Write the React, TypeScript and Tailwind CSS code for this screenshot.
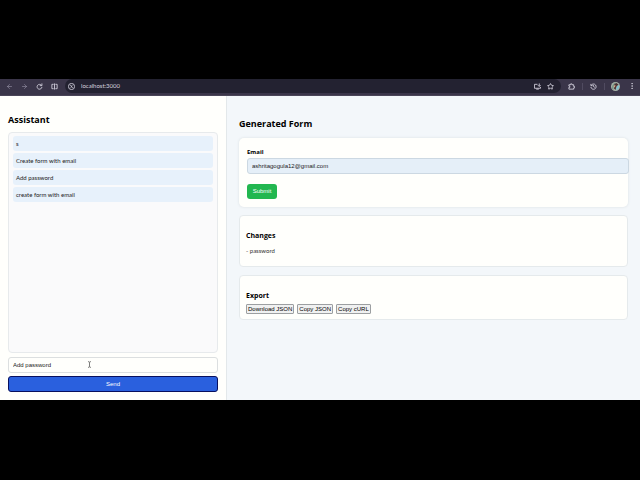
import React, { useState } from "react";
import { ArrowLeft, ArrowRight, EllipsisVertical, Star } from "lucide-react";

const messages = ["s", "Create form with email", "Add password", "create form with email"];

const App = () => {
  return (
    <div className="flex min-h-screen flex-col bg-black pt-[79px] pb-20 font-['Lato',sans-serif] text-black">
      <BrowserBar />
      <main className="flex flex-1 bg-[#f3f7fa]">
        <Assistant />
        <section className="flex min-w-0 flex-1 flex-col gap-2 py-5 pr-3 pl-3">
          <h2 className="pt-[2px] font-['Open_Sans',sans-serif] text-[9px] leading-[12px] font-bold">
            Generated Form
          </h2>
          <GeneratedForm />
          <Panel title="Changes" className="pb-[10px]">
            <p className="mt-[5px] text-[6px] leading-[10px] text-[#333]">- password</p>
          </Panel>
          <Panel title="Export" className="pb-[5px]">
            <div className="mt-[3px] flex gap-[3px]">
              <ExportButton label="Download JSON" />
              <ExportButton label="Copy JSON" />
              <ExportButton label="Copy cURL" />
            </div>
          </Panel>
        </section>
      </main>
    </div>
  );
};

const BrowserBar = () => {
  return (
    <header className="flex h-[17px] items-center border-b border-[#4a4558] bg-[#3a3549] pb-[2px] text-[#d4d1de]">
      <nav className="flex w-[65px] shrink-0 items-center gap-2 pl-[6px]">
        <IconButton label="Back">
          <ArrowLeft className="size-[7px] text-[#9b96aa]" />
        </IconButton>
        <IconButton label="Forward">
          <ArrowRight className="size-[7px] text-[#9b96aa]" />
        </IconButton>
        <IconButton label="Reload">
          <LineIcon d="M12.5 5.5A5.5 5.5 0 1 0 13.5 9M13.5 1V6H8.5" />
        </IconButton>
        <IconButton label="Split view">
          <LineIcon d="M6 3H2V13H6M10 3H14V13H10M8 1V15" />
        </IconButton>
      </nav>
      <div className="flex h-[14px] min-w-0 flex-1 items-center rounded-full bg-[#232231] pr-[7px] pl-[3px]">
        <IconButton label="Site information">
          <LineIcon d="M8 1A7 7 0 1 1 8 15A7 7 0 1 1 8 1M5 6H8M8 10H11M6 10L10 6" />
        </IconButton>
        <input
          aria-label="Address"
          defaultValue="localhost:3000"
          className="ml-[6px] min-w-0 flex-1 bg-transparent text-[6px] leading-[10px] outline-none"
        />
        <div className="flex gap-[6px]">
          <IconButton label="Install app">
            <LineIcon d="M8 3H1V12H15V9M5 14H11M12 1V7M9 5L12 8 15 5" />
          </IconButton>
          <IconButton label="Bookmark">
            <Star className="size-[7px]" strokeWidth={3} />
          </IconButton>
        </div>
      </div>
      <div className="flex items-center gap-[7px] pr-[5px] pl-[7px]">
        <IconButton label="Extensions">
          <LineIcon d="M2 4H6V2H9V4H13V8H15V11H13V14H2V10H4V7H2Z" />
        </IconButton>
        <span className="h-[7px] w-px bg-[#504b60]" />
        <IconButton label="History">
          <LineIcon d="M3 5A6 6 0 1 1 2 9M2 2V6H6M8 5V8L11 10" />
        </IconButton>
        <span className="h-[7px] w-px bg-[#504b60]" />
        <div className="flex gap-[9px]">
          <IconButton label="Profile">
            <Avatar />
          </IconButton>
          <IconButton label="Menu">
            <EllipsisVertical className="size-2 shrink-0" />
          </IconButton>
        </div>
      </div>
    </header>
  );
};

const IconButton = ({ label, children }: { label: string; children: React.ReactNode }) => {
  return (
    <button type="button" aria-label={label} className="flex h-2 w-[7px] shrink-0 items-center justify-center">
      {children}
    </button>
  );
};

const LineIcon = ({ d }: { d: string }) => {
  return (
    <svg
      viewBox="0 0 16 16"
      className="size-[7px] shrink-0"
      fill="none"
      stroke="currentColor"
      strokeWidth="2"
      strokeLinejoin="round"
    >
      <path d={d} />
    </svg>
  );
};

const Avatar = () => {
  return (
    <svg viewBox="0 0 18 18" className="size-[9px] shrink-0">
      <circle cx="9" cy="9" r="9" fill="#a9b3a8" />
      <path d="M2 14C1 7 5 2 10 1L8 6 5 9 5 16Z" fill="#789485" />
      <path d="M7 4 11 2 15 5 11 9 9 16 6 13Z" fill="#4a3437" />
      <path d="M12 8 17 7 15 13 10 17Z" fill="#7cc3d2" />
      <path d="M6 7 9 6 8 10 6 11Z" fill="#dba582" />
    </svg>
  );
};

const Assistant = () => {
  const [draft, setDraft] = useState("Add password");

  return (
    <aside className="flex w-[227px] shrink-0 flex-col border-r border-[#e3e8ea] bg-[#fffffc] p-2">
      <h2 className="mt-2 font-['Open_Sans',sans-serif] text-[9px] leading-[15px] font-bold">Assistant</h2>
      <ul className="mt-[5px] flex flex-1 flex-col gap-[2px] rounded-[4px] border border-[#e7eaec] bg-[#fafafb] px-1 py-[3px]">
        {messages.map((message) => (
          <li
            key={message}
            className="rounded-[3px] bg-[#e7f1fb] px-[3px] text-[6px] leading-[15px] text-[#222]"
          >
            {message}
          </li>
        ))}
      </ul>
      <form className="relative mt-1 flex flex-col gap-[3px]" onSubmit={(e) => e.preventDefault()}>
        <input
          aria-label="Message"
          value={draft}
          onChange={(e) => setDraft(e.target.value)}
          className="h-4 rounded-[3px] border border-[#dcdfe0] bg-[#fffffc] px-1 font-['Liberation_Sans',sans-serif] text-[6px] text-[#222] outline-none"
        />
        <TextCursor />
        <button
          type="submit"
          className="h-4 rounded-[3px] border border-[#08105e] bg-[#2a60de] font-['Liberation_Sans',sans-serif] text-[6px] text-white"
        >
          Send
        </button>
      </form>
    </aside>
  );
};

const TextCursor = () => {
  return (
    <svg
      viewBox="0 0 5 8"
      className="pointer-events-none absolute top-1 left-[79px] h-[7px] w-[5px]"
      fill="none"
      stroke="#444"
      strokeWidth="0.8"
    >
      <path d="M1 0.8H2L2.5 1.3 3 0.8H4M2.5 1.3V6.7M1 7.2H2L2.5 6.7 3 7.2H4" />
    </svg>
  );
};

const GeneratedForm = () => {
  return (
    <form
      className="rounded-[5px] bg-[#fffffc] px-2 pt-[9px] pb-2 shadow-[0_0_2px_1px_#e7ecef]"
      onSubmit={(e) => e.preventDefault()}
    >
      <label
        htmlFor="email"
        className="block font-['Open_Sans',sans-serif] text-[6px] leading-[10px] font-bold"
      >
        Email
      </label>
      {/* the field runs through the card's right padding */}
      <div className="-mr-[9px] mt-[1px] flex">
        <input
          id="email"
          type="email"
          defaultValue="ashritagogula12@gmail.com"
          className="h-4 min-w-0 flex-1 rounded-[3px] border border-[#ccd8e2] bg-[#e5eff8] px-1 font-['Liberation_Sans',sans-serif] text-[6px] text-[#222] outline-none"
        />
      </div>
      <button
        type="submit"
        className="mt-[10px] block h-[15px] w-[30px] rounded-[3px] bg-[#22b750] font-['Liberation_Sans',sans-serif] text-[6px] text-white"
      >
        Submit
      </button>
    </form>
  );
};

const Panel = ({
  title,
  className,
  children,
}: {
  title: string;
  className: string;
  children: React.ReactNode;
}) => {
  return (
    <section className={`rounded-[4px] border border-[#e5eaec] bg-[#fffffc] px-[6px] pt-[14px] ${className}`}>
      <h3 className="font-['Open_Sans',sans-serif] text-[7px] leading-[11px] font-bold">{title}</h3>
      {children}
    </section>
  );
};

const ExportButton = ({ label }: { label: string }) => {
  return (
    <button
      type="button"
      className="h-[10px] rounded-[1px] border border-[#9c9fa1] bg-[#f0f1f1] px-px font-['Liberation_Sans',sans-serif] text-[6px] leading-[8px]"
    >
      {label}
    </button>
  );
};

export default App;
